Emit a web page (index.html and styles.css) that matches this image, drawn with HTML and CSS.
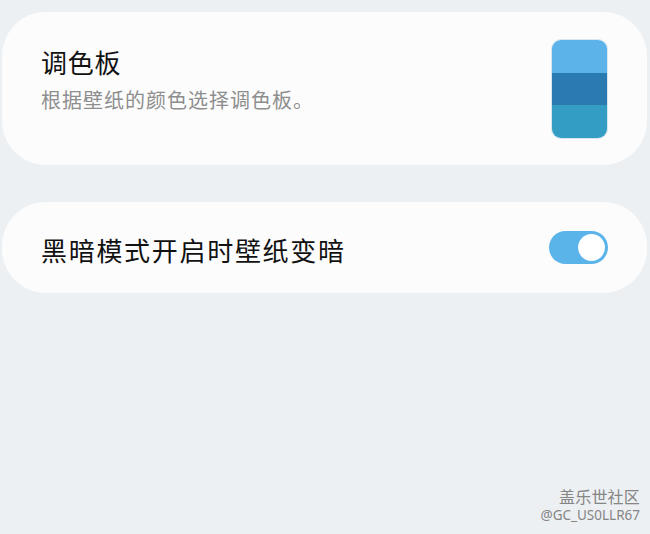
FILE: index.html
```html
<!DOCTYPE html>
<html lang="zh">
<head>
<meta charset="utf-8">
<link rel="stylesheet" href="styles.css">
</head>
<body>
<main class="page">
  <section class="card card-palette">
    <div class="text">
      <div class="title">调色板</div>
      <div class="subtitle">根据壁纸的颜色选择调色板。</div>
    </div>
    <div class="swatch">
      <div class="band band-1"></div>
      <div class="band band-2"></div>
      <div class="band band-3"></div>
    </div>
  </section>
  <section class="card card-dark">
    <div class="label">黑暗模式开启时壁纸变暗</div>
    <div class="toggle"><div class="knob"></div></div>
  </section>
</main>
<div class="watermark">
  <div class="wm-1">盖乐世社区</div>
  <div class="wm-2">@GC_US0LLR67</div>
</div>
</body>
</html>
```
FILE: styles.css
```css
html, body {
  margin: 0;
  padding: 0;
}
body {
  width: 650px;
  height: 534px;
  background: #edf0f3;
  font-family: "Noto Sans CJK SC", "Noto Sans", sans-serif;
  position: relative;
  overflow: hidden;
}
.page {
  display: flex;
  flex-direction: column;
  gap: 37px;
  padding: 12px 3px 0 2px;
}
.card {
  background: #fcfcfc;
  border-radius: 44px;
  display: flex;
  align-items: center;
  justify-content: space-between;
}
.card-palette {
  padding: 28px 40px 27px 39px;
  align-items: flex-start;
}
.card-palette .text {
  margin-top: 6px;
}
.title {
  font-size: 26px;
  line-height: 32px;
  color: #111;
  letter-spacing: 0.7px;
}
.subtitle {
  margin-top: 8px;
  font-size: 20px;
  line-height: 28px;
  color: #8e8e8e;
  letter-spacing: 1px;
}
.swatch {
  width: 55px;
  height: 98px;
  border-radius: 9px;
  overflow: hidden;
  display: flex;
  flex-direction: column;
  box-shadow: 0 0 0 1px rgba(150, 190, 215, 0.35);
}
.band { flex: 1; }
.band-1 { background: #5bb3e9; }
.band-2 { background: #2c7bb0; }
.band-3 { background: #349dc3; }

.card-dark {
  height: 91px;
  box-sizing: border-box;
  padding: 0 39px 0 39px;
}
.label {
  font-size: 26px;
  line-height: 34px;
  color: #111;
  letter-spacing: 1.7px;
  padding-top: 4px;
}
.toggle {
  width: 59px;
  height: 33px;
  border-radius: 17px;
  background: #5ab4ea;
  box-sizing: border-box;
  padding: 3px;
  display: flex;
  justify-content: flex-end;
}
.knob {
  width: 27px;
  height: 27px;
  border-radius: 50%;
  background: #ffffff;
}
.watermark {
  position: absolute;
  right: 10px;
  bottom: 10px;
  text-align: right;
  color: #858585;
  display: flex;
  flex-direction: column;
  align-items: flex-end;
}
.wm-1 {
  font-size: 16px;
  line-height: 19px;
  letter-spacing: 0.2px;
}
.wm-2 {
  font-family: "Noto Sans", sans-serif;
  font-size: 13.5px;
  line-height: 17px;
  margin-top: 1px;
}
```
